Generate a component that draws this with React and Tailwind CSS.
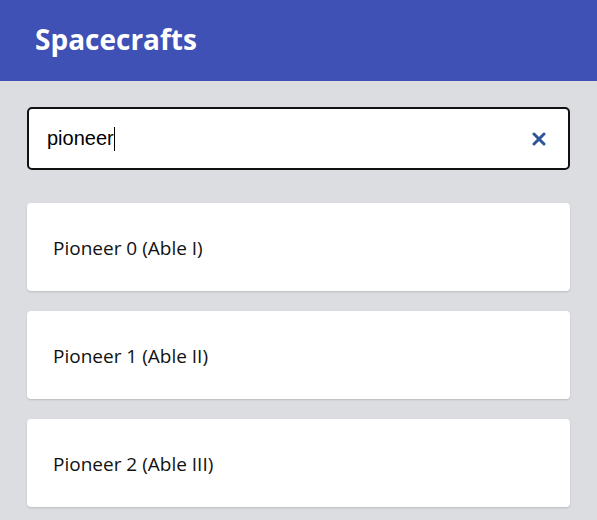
import { useState } from 'react';

const crafts = ['Pioneer 0 (Able I)', 'Pioneer 1 (Able II)', 'Pioneer 2 (Able III)'];

const App = () => {
    const [query, setQuery] = useState('pioneer');

    return (
        <div className="min-h-screen bg-[#dcdde0]" style={{ fontFamily: '"Open Sans", "Noto Sans", sans-serif' }}>
            <header className="h-[81px] bg-[#3f51b5] px-[35px] flex items-center">
                <h1 className="text-white text-[28px] font-bold leading-none pb-[3px]">Spacecrafts</h1>
            </header>

            <main className="px-[27px] pt-[26px]">
                <div className="relative h-[63px] bg-white border-2 border-[#111] rounded-[5px] flex items-center">
                    <input
                        value={query}
                        onChange={e => setQuery(e.target.value)}
                        className="flex-1 h-full pl-[18px] pr-[50px] bg-transparent outline-none text-[20px] text-black"
                        style={{ fontFamily: '"Liberation Sans", Arial, sans-serif' }}
                    />
                    <span className="absolute left-[85px] top-[18px] w-px h-[24px] bg-black" />
                    <button onClick={() => setQuery('')} className="absolute right-[22px] top-1/2 -translate-y-1/2 text-[#2f5597]">
                        <svg width="14" height="14" viewBox="0 0 14 14">
                            <path d="M2 2 L12 12 M12 2 L2 12" stroke="currentColor" strokeWidth="3" strokeLinecap="round" />
                        </svg>
                    </button>
                </div>

                <div className="mt-[33px] flex flex-col gap-[20px]">
                    {crafts.map(c => (
                        <div key={c} className="h-[88px] bg-white rounded-[4px] shadow-[0_1px_2px_rgba(0,0,0,0.15)] flex items-center px-[26px]">
                            <p className="text-[19px] text-[#111] pt-[3px]">{c}</p>
                        </div>
                    ))}
                </div>
            </main>
        </div>
    );
};

export default App;
